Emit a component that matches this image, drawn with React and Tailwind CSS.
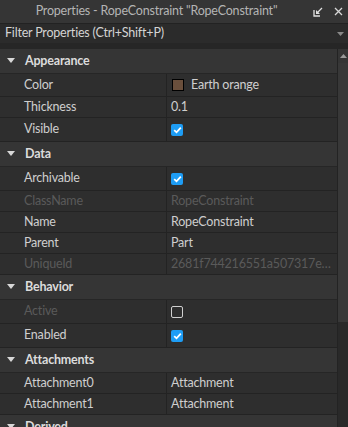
import React from "react";

const font = { fontFamily: 'Lato, "Open Sans", sans-serif', letterSpacing: "-0.2px" };

function Check({ on }) {
  if (!on) {
    return <div className="w-[12px] h-[12px] rounded-[2px] border border-[#d0d0d0]" />;
  }
  return (
    <div className="w-[12px] h-[12px] rounded-[2px] bg-[#1e9df5] flex items-center justify-center">
      <svg width="9" height="8" viewBox="0 0 9 8">
        <path d="M1.2 4.2 L3.5 6.3 L7.8 1.6" stroke="#fff" strokeWidth="1.8" fill="none" />
      </svg>
    </div>
  );
}

function Header({ title }) {
  return (
    <div className="h-[25px] flex items-center bg-[#353535] border-b border-[#262626]">
      <svg className="ml-[7px] mr-[10px]" width="8" height="6" viewBox="0 0 8 6">
        <path d="M0 0 H8 L4 5 Z" fill="#d8d8d8" />
      </svg>
      <span className="text-[12.5px] font-bold text-[#dcdcdc]">{title}</span>
    </div>
  );
}

function Row({ name, children, h = "h-[21px]", disabled }) {
  return (
    <div className={`${h} flex border-b border-[#232323] bg-[#2e2e2e]`}>
      <div
        className={`w-[167px] pl-[24px] flex items-center text-[12.5px] border-r border-[#232323] ${
          disabled ? "text-[#5a5a5a]" : "text-[#cfcfcf]"
        }`}
      >
        {name}
      </div>
      <div
        className={`flex-1 min-w-0 pl-[4px] pr-[6px] flex items-center text-[12.5px] ${
          disabled ? "text-[#5a5a5a]" : "text-[#cfcfcf]"
        }`}
      >
        {children}
      </div>
    </div>
  );
}

export default function App() {
  return (
    <div className="w-[348px] h-[427px] overflow-hidden bg-[#2e2e2e] flex flex-col" style={font}>
      {/* title bar */}
      <div className="h-[24px] flex items-center bg-[#353535] border-b border-[#222]">
        <div className="flex-1 text-center text-[12.5px] text-[#b4b4b4]">
          Properties - RopeConstraint "RopeConstraint"
        </div>
        <svg className="mr-[11px]" width="10" height="10" viewBox="0 0 10 10">
          <path d="M1 3 V9 H7" stroke="#e0e0e0" strokeWidth="1.3" fill="none" />
          <path d="M9 1 L4 6" stroke="#e0e0e0" strokeWidth="1.3" />
          <path d="M3 3 V7 H7 Z" fill="#e0e0e0" />
        </svg>
        <svg className="mr-[5px]" width="9" height="9" viewBox="0 0 9 9">
          <path d="M1 1 L8 8 M8 1 L1 8" stroke="#d8d8d8" strokeWidth="1.3" />
        </svg>
      </div>

      {/* filter */}
      <div className="h-[19px] flex items-center bg-[#2b2b2b]">
        <span className="flex-1 pl-[5px] text-[12.5px] text-[#d4d4d4]">Filter Properties (Ctrl+Shift+P)</span>
        <svg className="mr-[4px]" width="7" height="4" viewBox="0 0 7 4">
          <path d="M0 0 H7 L3.5 4 Z" fill="#888" />
        </svg>
      </div>
      <div className="h-[6px] bg-[#262626]" />

      <div className="flex flex-1 min-h-0">
        <div className="flex-1 min-w-0 overflow-hidden">
          <Header title="Appearance" />
          <Row name="Color" h="h-[23px]">
            <div className="w-[12px] h-[12px] bg-[#6a4f3c] border border-black ml-[1px] mr-[7px]" />
            Earth orange
          </Row>
          <Row name="Thickness">0.1</Row>
          <Row name="Visible" h="h-[24px]">
            <Check on />
          </Row>

          <Header title="Data" />
          <Row name="Archivable" h="h-[24px]">
            <Check on />
          </Row>
          <Row name="ClassName" disabled>
            RopeConstraint
          </Row>
          <Row name="Name">RopeConstraint</Row>
          <Row name="Parent">Part</Row>
          <Row name="UniqueId" disabled>
            <span className="truncate">2681f744216551a507317eee0d3a2b81</span>
          </Row>

          <Header title="Behavior" />
          <Row name="Active" h="h-[24px]" disabled>
            <Check />
          </Row>
          <Row name="Enabled" h="h-[24px]">
            <Check on />
          </Row>

          <Header title="Attachments" />
          <Row name="Attachment0">Attachment</Row>
          <Row name="Attachment1">Attachment</Row>

          <Header title="Derived" />
        </div>

        {/* scrollbar */}
        <div className="w-[11px] bg-[#292929] border-l border-[#232323] flex flex-col">
          <div className="h-[14px] flex items-center justify-center bg-[#353535]">
            <svg width="7" height="4" viewBox="0 0 7 4">
              <path d="M0 4 H7 L3.5 0 Z" fill="#9a9a9a" />
            </svg>
          </div>
          <div className="h-[259px] bg-[#383838]" />
        </div>
      </div>
    </div>
  );
}
